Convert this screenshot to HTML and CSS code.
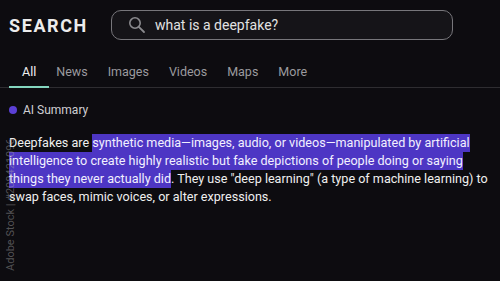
FILE: index.html
```html
<!DOCTYPE html>
<html lang="en">
<head>
    <meta charset="UTF-8">
    <meta name="viewport" content="width=device-width, initial-scale=1.0">
    <title>Search</title>
    <link rel="stylesheet" href="styles.css">
</head>
<body>
    <div class="page">
        <div class="header">
            <h1>SEARCH</h1>
            <div class="search-box">
                <svg class="search-icon" width="18" height="18" viewBox="0 0 18 18">
                    <circle cx="7" cy="7" r="5.2" fill="none" stroke="#8a8a8e" stroke-width="1.6"/>
                    <line x1="10.8" y1="10.8" x2="16" y2="16" stroke="#8a8a8e" stroke-width="1.8" stroke-linecap="round"/>
                </svg>
                <span class="query">what is a deepfake?</span>
            </div>
        </div>

        <div class="tabs">
            <span class="tab active">All</span>
            <span class="tab">News</span>
            <span class="tab">Images</span>
            <span class="tab">Videos</span>
            <span class="tab">Maps</span>
            <span class="tab">More</span>
        </div>

        <div class="summary-label">
            <span class="dot"></span>
            AI Summary
        </div>

        <p class="answer">Deepfakes are <mark>synthetic media—images, audio, or videos—manipulated by artificial intelligence to create highly realistic but fake depictions of people doing or saying things they never actually did</mark>. They use "deep learning" (a type of machine learning) to swap faces, mimic voices, or alter expressions.</p>
    </div>

    <div class="stock-id">Adobe Stock | #208421096</div>
</body>
</html>
```

FILE: styles.css
```css
body {
    font-family: Roboto, "Open Sans", sans-serif;
    margin: 0;
    padding: 0;
    background-color: #0d0c10;
    color: #e6e6e6;
    width: 500px;
    height: 281px;
    overflow: hidden;
    position: relative;
}
.page {
    padding: 0 9px;
}
.header {
    display: flex;
    align-items: center;
    height: 50px;
}
.header h1 {
    margin: 0;
    font-size: 18px;
    font-weight: 700;
    letter-spacing: 1.6px;
    color: #ececec;
    width: 102px;
}
.search-box {
    display: flex;
    align-items: center;
    width: 342px;
    height: 30px;
    border: 1px solid #77767b;
    border-radius: 10px;
    background-color: #151418;
    padding-left: 16px;
    box-sizing: border-box;
}
.search-icon {
    margin-right: 9px;
}
.query {
    font-size: 14px;
    color: #e2e2e2;
}
.tabs {
    display: flex;
    gap: 20px;
    margin: 8px -9px 0;
    padding-left: 22px;
    border-bottom: 1px solid #2e2d31;
}
.tab {
    font-size: 12.5px;
    color: #9b9a9f;
    padding: 6px 0 8px;
    position: relative;
}
.tab.active {
    color: #f0f0f0;
}
.tab.active::after {
    content: "";
    position: absolute;
    left: -13px;
    right: -13px;
    bottom: -1px;
    height: 2px;
    background-color: #84d6bf;
}
.summary-label {
    display: flex;
    align-items: center;
    font-size: 12px;
    color: #cfcfd3;
    margin-top: 15px;
}
.dot {
    width: 8px;
    height: 8px;
    border-radius: 50%;
    background-color: #5b40d6;
    margin-right: 6px;
}
.answer {
    margin: 17px 0 0;
    font-size: 12.6px;
    line-height: 18px;
    color: #efefef;
}
.answer mark {
    background-color: #4d36c4;
    color: #f2f0ff;
    padding: 1px 0 2px;
}
.stock-id {
    position: absolute;
    left: 4px;
    bottom: 10px;
    transform-origin: left bottom;
    transform: rotate(-90deg) translateY(100%);
    font-size: 11px;
    color: rgba(170, 170, 170, 0.45);
    white-space: nowrap;
}
```
